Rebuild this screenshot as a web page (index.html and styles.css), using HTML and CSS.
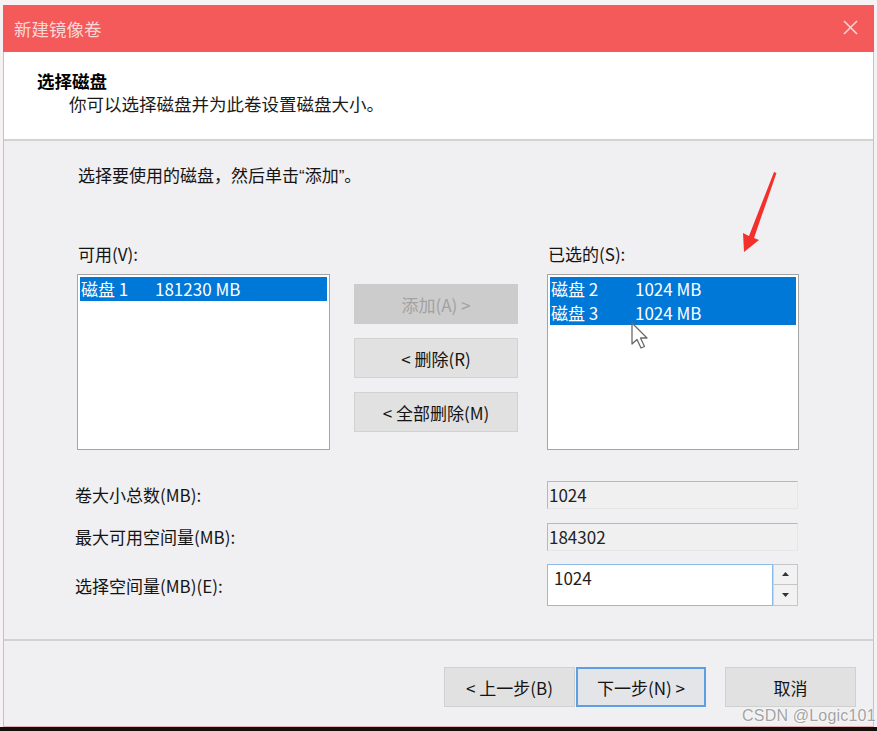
FILE: index.html
```html
<!DOCTYPE html>
<html lang="zh-CN">
<head>
<meta charset="utf-8">
<title>新建镜像卷</title>
<link rel="stylesheet" href="styles.css">
</head>
<body>
<div class="window">
  <div class="titlebar">
    <span class="title">新建镜像卷</span>
    <svg class="close" width="15" height="15" viewBox="0 0 15 15"><path d="M1 1 L14 14 M14 1 L1 14" stroke="#fcd6d6" stroke-width="1.5" fill="none"/></svg>
  </div>
  <div class="header">
    <div class="h-title">选择磁盘</div>
    <div class="h-sub">你可以选择磁盘并为此卷设置磁盘大小。</div>
  </div>
  <div class="content">
    <div class="instr">选择要使用的磁盘，然后单击<span class="q">“</span>添加<span class="q">”</span>。</div>
    <div class="pick">
      <div class="lbl lbl-a">可用(V):</div>
      <div class="lbl lbl-s">已选的(S):</div>
      <div class="listbox list-a">
        <div class="row sel"><span class="name name-a">磁盘 1</span><span>181230 MB</span></div>
      </div>
      <div class="btncol">
        <div class="btn disabled">添加(A) &gt;</div>
        <div class="btn">&lt;&nbsp;删除(R)</div>
        <div class="btn">&lt;&nbsp;全部删除(M)</div>
      </div>
      <div class="listbox list-s">
        <div class="row sel"><span class="name name-s">磁盘 2</span><span>1024 MB</span></div>
        <div class="row sel"><span class="name name-s">磁盘 3</span><span>1024 MB</span></div>
      </div>
    </div>
    <div class="fields">
      <div class="flabel">卷大小总数(MB):</div>
      <div class="ro r1">1024</div>
      <div class="flabel">最大可用空间量(MB):</div>
      <div class="ro r2">184302</div>
      <div class="flabel">选择空间量(MB)(E):</div>
      <div class="spin">
        <div class="spin-text">1024</div>
        <div class="spin-btns">
          <div class="sb"><svg width="7" height="4" viewBox="0 0 7 4"><path d="M0 4 L3.5 0 L7 4 Z" fill="#333"/></svg></div>
          <div class="sb"><svg width="7" height="4" viewBox="0 0 7 4"><path d="M0 0 L3.5 4 L7 0 Z" fill="#333"/></svg></div>
        </div>
      </div>
    </div>
  </div>
  <div class="footer">
    <div class="fbtn">&lt;&nbsp;上一步(B)</div>
    <div class="fbtn primary">下一步(N)&nbsp;&gt;</div>
    <div class="fbtn cancel">取消</div>
  </div>
</div>
<svg class="redarrow" width="40" height="85" viewBox="740 170 40 85"><polygon points="774,172 749,236 743,233 744,252 759,240 754,238 776.5,173" fill="#f3302b"/></svg>
<svg class="cursor" width="20" height="28" viewBox="0 0 20 28"><path d="M1 1 L1 22 L6 17.5 L10 26 L13.5 24.5 L9.5 16 L16 16 Z" fill="#ffffff" stroke="#6a6a6a" stroke-width="1.3" stroke-linejoin="round"/></svg>
<div class="watermark">CSDN @Logic101</div>
</body>
</html>
```
FILE: styles.css
```css
html, body {
  margin: 0;
  padding: 0;
}
body {
  width: 877px;
  height: 731px;
  position: relative;
  overflow: hidden;
  background: linear-gradient(to bottom, #f6f1f2 727px, #150c0c 727px);
  font-family: "Noto Sans CJK SC", "Microsoft YaHei", sans-serif;
  color: #141414;
}
.window {
  margin: 5px 0 0 3px;
  width: 871px;
  height: 722px;
  box-sizing: border-box;
  border-left: 1px solid #e8b3b3;
  border-right: 1px solid #e8b3b3;
  border-bottom: 1px solid #e2b0b0;
  display: flex;
  flex-direction: column;
  background: #f0eff1;
}
.titlebar {
  height: 47px;
  flex: none;
  background: #f35a59;
  display: flex;
  align-items: center;
  justify-content: space-between;
  padding: 0 16px 0 11px;
  margin: 0 -1px;
}
.title {
  color: #fcd7d7;
  font-size: 17.5px;
  line-height: 24px;
}
.close {
  display: block;
  margin-top: -2px;
}
.header {
  height: 87px;
  flex: none;
  box-sizing: border-box;
  background: #ffffff;
  padding: 17px 0 0 33px;
}
.h-title {
  font-weight: bold;
  font-size: 17.5px;
  line-height: 23px;
  color: #000;
}
.h-sub {
  font-size: 17.5px;
  line-height: 23px;
  padding-left: 32px;
  color: #1a1a1a;
}
.content {
  height: 498px;
  flex: none;
  border-top: 2px solid #d3d3d5;
  padding-left: 73px;
}
.instr {
  margin-top: 24px;
  height: 20px;
  font-size: 17px;
  line-height: 20px;
  padding-left: 1px;
  overflow: visible;
}
.q {
  font-family: "Liberation Sans", Arial, sans-serif;
  line-height: 1;
}
.pick {
  margin-top: 59px;
  display: grid;
  grid-template-columns: 253px 24px 164px 29px 252px;
  grid-template-rows: 20px 176px;
  row-gap: 10px;
}
.lbl {
  font-size: 17px;
  line-height: 20px;
  padding-left: 1px;
}
.lbl-a { grid-column: 1; grid-row: 1; }
.lbl-s { grid-column: 5; grid-row: 1; }
.list-a { grid-column: 1; grid-row: 2; }
.list-s { grid-column: 5; grid-row: 2; }
.btncol {
  grid-column: 3;
  grid-row: 2;
  display: flex;
  flex-direction: column;
  gap: 14px;
  padding-top: 10px;
}
.listbox {
  background: #ffffff;
  border: 1px solid #a4a4a6;
  padding: 2px;
  box-sizing: border-box;
}
.row {
  height: 24px;
  line-height: 24px;
  font-size: 17px;
  padding-left: 1px;
  display: flex;
  white-space: nowrap;
}
.sel {
  background: #0078d7;
  color: #ffffff;
}
.name-a { width: 74px; }
.name-s { width: 84px; }
.btn {
  height: 40px;
  box-sizing: border-box;
  background: #e1e1e1;
  border: 1px solid #d2d2d2;
  display: flex;
  align-items: center;
  justify-content: center;
  font-size: 17px;
  color: #141414;
}
.btn.disabled {
  background: #cccccc;
  border-color: #cccccc;
  color: #a2a2a2;
}
.fields {
  margin-top: 31px;
  display: grid;
  grid-template-columns: 470px 251px;
  grid-template-rows: 28px 28px 42px;
  row-gap: 14px;
  align-items: center;
}
.fields .spin { margin-top: -3px; }
.flabel {
  font-size: 17px;
  line-height: 20px;
  margin-left: -2px;
}
.ro {
  height: 28px;
  box-sizing: border-box;
  background: #f0f0f1;
  border: 1px solid;
  border-color: #b8b8ba #e6e6e8 #e6e6e8 #b8b8ba;
  font-size: 17px;
  line-height: 26px;
  padding-left: 1px;
  color: #222;
}
.spin {
  height: 42px;
  display: flex;
}
.spin-text {
  flex: 1;
  background: #ffffff;
  border: 1px solid #8dbbea;
  font-size: 17px;
  line-height: 26px;
  padding-left: 6px;
  color: #1e1e1e;
}
.spin-btns {
  width: 25px;
  display: flex;
  flex-direction: column;
  border: 1px solid #c6c6c8;
  border-left: none;
  box-sizing: border-box;
}
.sb {
  flex: 1;
  display: flex;
  align-items: center;
  justify-content: center;
  background: #f2f2f3;
  border-left: 1px solid #d4d4d6;
}
.sb + .sb {
  border-top: 1px solid #c6c6c8;
}
.footer {
  flex: 1;
  border-top: 2px solid #d2d2d4;
  display: flex;
  justify-content: flex-end;
  align-items: flex-start;
  padding: 26px 17px 0 0;
}
.fbtn {
  height: 40px;
  width: 131px;
  box-sizing: border-box;
  background: #e1e1e1;
  border: 1px solid #d0d0d0;
  display: flex;
  align-items: center;
  justify-content: center;
  font-size: 17px;
  color: #141414;
}
.fbtn.primary {
  width: 130px;
  margin-left: 1px;
  border: 2px solid #5d9fe0;
  background: #e3e5e9;
}
.fbtn.cancel {
  margin-left: 19px;
}
.redarrow {
  position: absolute;
  left: 740px;
  top: 170px;
}
.cursor {
  position: absolute;
  left: 631px;
  top: 322px;
}
.watermark {
  position: absolute;
  left: 742px;
  top: 706px;
  font-family: "Liberation Sans", Arial, sans-serif;
  font-size: 16px;
  line-height: 20px;
  color: #a3a3a3;
  text-shadow: 0 0 2px #ffffff, 0 0 2px #ffffff;
  letter-spacing: 0.2px;
}
```
